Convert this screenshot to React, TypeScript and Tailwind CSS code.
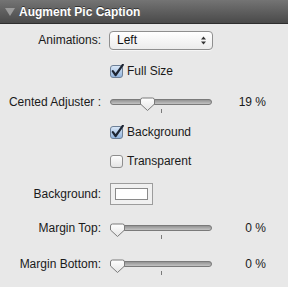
import React from "react";

const font = { fontFamily: '"Liberation Sans", Arial, sans-serif' };

function Check({ on }: { on: boolean }) {
  return (
    <svg width="15" height="14" viewBox="0 0 15 14">
      <defs>
        <linearGradient id={on ? "cbOn" : "cbOff"} x1="0" y1="0" x2="0" y2="1">
          <stop offset="0" stopColor={on ? "#dbe8f7" : "#ffffff"} />
          <stop offset="1" stopColor={on ? "#8fb2dc" : "#e2e2e2"} />
        </linearGradient>
      </defs>
      <rect x="0.5" y="1.5" width="12" height="12" rx="2.5" fill={`url(#${on ? "cbOn" : "cbOff"})`} stroke={on ? "#6d7f96" : "#8e8e8e"} />
      {on && (
        <path d="M2.8 7.2 L5.6 11 L12.8 0.8" fill="none" stroke="#1d2533" strokeWidth="2.2" strokeLinecap="round" strokeLinejoin="round" />
      )}
    </svg>
  );
}

function Slider({ pos }: { pos: number }) {
  return (
    <svg width="103" height="22" viewBox="0 0 103 22">
      <defs>
        <linearGradient id="trk" x1="0" y1="0" x2="0" y2="1">
          <stop offset="0" stopColor="#8d8d8d" />
          <stop offset="1" stopColor="#c9c9c9" />
        </linearGradient>
        <linearGradient id="thb" x1="0" y1="0" x2="0" y2="1">
          <stop offset="0" stopColor="#ffffff" />
          <stop offset="1" stopColor="#e4e4e4" />
        </linearGradient>
      </defs>
      <rect x="0.5" y="8.5" width="101" height="5" rx="2.5" fill="url(#trk)" stroke="#7a7a7a" />
      <line x1="51.5" y1="18" x2="51.5" y2="22" stroke="#7a7a7a" />
      <path
        d={`M${pos + 0.5} 9 Q${pos + 0.5} 7 ${pos + 2.5} 7 L${pos + 12.5} 7 Q${pos + 14.5} 7 ${pos + 14.5} 9 L${pos + 14.5} 13 L${pos + 7.5} 19.5 L${pos + 0.5} 13 Z`}
        fill="url(#thb)"
        stroke="#7b7b7b"
      />
    </svg>
  );
}

function Label({ children }: { children: React.ReactNode }) {
  return <div className="w-[101px] shrink-0 text-right text-[12px] text-[#1a1a1a]">{children}</div>;
}

export default function App() {
  return (
    <div className="w-[288px] h-[287px] bg-[#e8e8e8] flex flex-col overflow-hidden" style={font}>
      <div className="h-[24px] shrink-0 flex items-center bg-gradient-to-b from-[#747474] to-[#4a4a4a] border-b border-[#2e2e2e]">
        <svg width="10" height="8" viewBox="0 0 10 8" className="ml-[5px]">
          <path d="M0 0 L10 0 L5 8 Z" fill="#9b9b9b" />
        </svg>
        <span className="ml-[4px] text-[12px] font-bold text-white [text-shadow:0_-1px_0_#333]">Augment Pic Caption</span>
      </div>

      <div className="mt-[6px] h-[20px] flex items-center">
        <Label>Animations:</Label>
        <div className="ml-[8px] w-[104px] h-[19px] rounded-[4px] border border-[#8f8f8f] bg-gradient-to-b from-white to-[#ececec] flex items-center justify-between pl-[7px] pr-[6px] text-[12px] text-[#111] shadow-[0_1px_0_#f6f6f6]">
          <span>Left</span>
          <svg width="5" height="9" viewBox="0 0 5 9">
            <path d="M0 3.5 L2.5 0.5 L5 3.5 Z M0 5.5 L2.5 8.5 L5 5.5 Z" fill="#333" />
          </svg>
        </div>
      </div>

      <div className="mt-[11px] h-[20px] flex items-center pl-[110px] gap-[2px] text-[12px] text-[#1a1a1a]">
        <Check on />
        <span>Full Size</span>
      </div>

      <div className="mt-[10px] h-[22px] flex items-center text-[12px] text-[#1a1a1a]">
        <Label>Cented Adjuster :</Label>
        <div className="ml-[9px]">
          <Slider pos={30} />
        </div>
        <div className="flex-1 text-right pr-[22px]">19 %</div>
      </div>

      <div className="mt-[9px] h-[20px] flex items-center pl-[110px] gap-[2px] text-[12px] text-[#1a1a1a]">
        <Check on />
        <span>Background</span>
      </div>

      <div className="mt-[9px] h-[20px] flex items-center pl-[110px] gap-[2px] text-[12px] text-[#1a1a1a]">
        <Check on={false} />
        <span>Transparent</span>
      </div>

      <div className="mt-[12px] h-[22px] flex items-center">
        <Label>Background:</Label>
        <div className="ml-[9px] w-[43px] h-[22px] border border-[#9c9c9c] bg-[#f0f0f0] flex items-center justify-center">
          <div className="w-[33px] h-[12px] border border-[#8a8a8a] bg-white" />
        </div>
      </div>

      <div className="mt-[12px] h-[22px] flex items-center text-[12px] text-[#1a1a1a]">
        <Label>Margin Top:</Label>
        <div className="ml-[9px]">
          <Slider pos={0} />
        </div>
        <div className="flex-1 text-right pr-[22px]">0 %</div>
      </div>

      <div className="mt-[14px] h-[22px] flex items-center text-[12px] text-[#1a1a1a]">
        <Label>Margin Bottom:</Label>
        <div className="ml-[9px]">
          <Slider pos={0} />
        </div>
        <div className="flex-1 text-right pr-[22px]">0 %</div>
      </div>
    </div>
  );
}
